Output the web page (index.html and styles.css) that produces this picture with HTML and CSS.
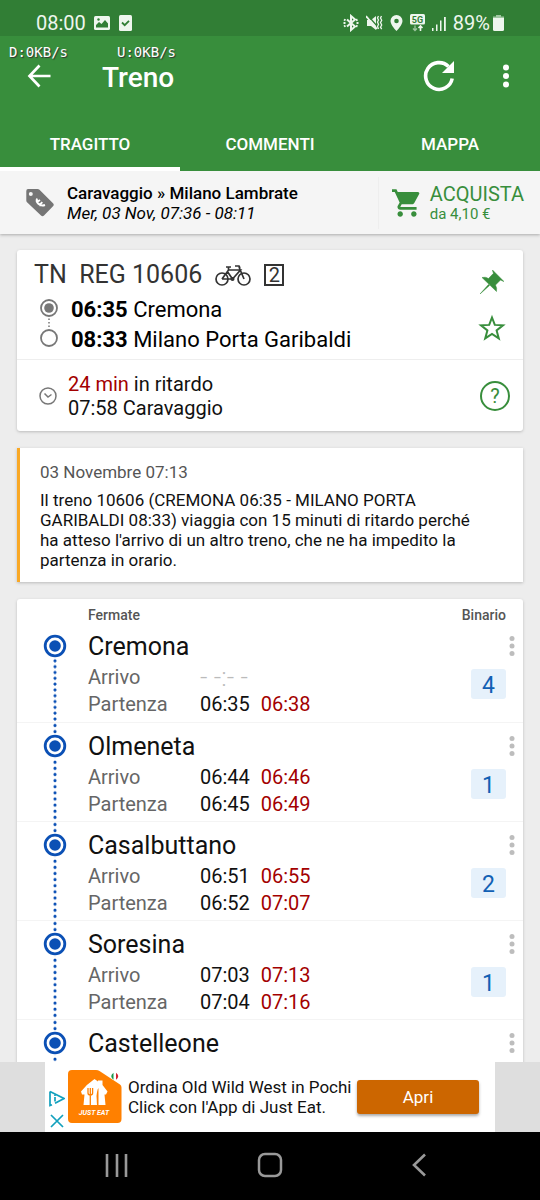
FILE: index.html
```html
<!DOCTYPE html>
<html lang="it">
<head>
<meta charset="utf-8">
<meta name="viewport" content="width=device-width, initial-scale=1">
<title>Treno</title>
<link rel="stylesheet" href="styles.css">
</head>
<body>
<svg class="defs" aria-hidden="true">
  <symbol id="stop" viewBox="0 0 24 24"><circle cx="12" cy="12" r="12" fill="#fff"/><circle cx="12" cy="12" r="9.8" fill="#fff" stroke="#0b50b5" stroke-width="2.8"/><circle cx="12" cy="12" r="5.8" fill="#0b50b5"/></symbol>
  <symbol id="dots" viewBox="0 0 6 22"><circle cx="3" cy="3.5" r="2.5"/><circle cx="3" cy="11" r="2.5"/><circle cx="3" cy="18.5" r="2.5"/></symbol>
</svg>
<div class="status">
  <span>08:00</span>
  <svg width="16" height="16" viewBox="0 0 16 16"><rect y="1" width="16" height="14" rx="1.5" fill="#eef6ee"/><path d="M2 12.5V10l3-3 2.500 2 3.500-4 3 3.500v4z" fill="#317e35"/><circle cx="4.500" cy="4.500" r="1.200" fill="#317e35"/></svg>
  <svg class="doc" width="13" height="16" viewBox="0 0 13 16"><rect width="13" height="16" rx="1.500" fill="#eef6ee"/><path d="M3 7.500l2.700 2.700L10 5.800" fill="none" stroke="#317e35" stroke-width="1.800"/></svg>
  <div class="status-right">
    <svg width="16" height="18" viewBox="0 0 16 18" fill="none" stroke="#eef6ee" stroke-width="2"><path d="M4 5.500l8 7-4 3.500V2l4 3.500-8 7"/><path d="M.5 9h2M13.500 9h2M13 6.300l1.500-.8M13 11.700l1.500.8M1 5.500l1.500.9M1 12.500l1.500-.9"/></svg>
    <svg width="17" height="18" viewBox="0 0 17 18" fill="#eef6ee"><path d="M1 6h4l5-4v14l-5-4H1z"/><path d="M1.500 1L11 12" stroke="#317e35" stroke-width="1.200"/><path d="M0 2l11 13" stroke="#eef6ee" stroke-width="1.800"/><path d="M12.500 2l-1 2 1 2-1 2 1 2.500-1 2 1 2.500M15.500 2l-1 2 1.200 2.300-1.200 2.300 1.200 2.400-1.200 2.200 1.200 2" fill="none" stroke="#eef6ee" stroke-width="1.300"/></svg>
    <svg width="13" height="18" viewBox="0 0 13 18"><path fill-rule="evenodd" fill="#eef6ee" d="M6.500 1A6 6 0 0 0 .5 7c0 4 6 10 6 10s6-6 6-10a6 6 0 0 0-6-6zm0 3.700a2.300 2.300 0 1 1 0 4.600 2.300 2.300 0 0 1 0-4.600z"/></svg>
    <svg width="15" height="18" viewBox="0 0 15 18"><rect width="15" height="10.500" rx="1.500" fill="#eef6ee"/><text x="7.500" y="8.500" text-anchor="middle" class="net">5G</text><path d="M5 11.500v5M3 14.500l2 2 2-2" fill="none" stroke="#9fc7a1" stroke-width="1.300"/><path d="M10.500 17v-5M8.500 14l2-2 2 2" fill="none" stroke="#eef6ee" stroke-width="1.600"/></svg>
    <svg width="14" height="18" viewBox="0 0 14 18" fill="#eef6ee"><path d="M0 14h1.500v3H0zM4 10.500h1.500V17H4zM8 6.500h1.500V17H8zM12 3h1.800v14H12z"/></svg>
    <span>89%</span>
    <svg class="battery" width="11" height="18" viewBox="0 0 11 18"><path d="M3 1h5v1.500h3V5H0V2.500h3z" fill="#9fc7a1"/><path d="M0 4h11v11.500q0 1.500-1.500 1.500h-8Q0 17 0 15.500z" fill="#eef6ee"/></svg>
  </div>
</div>
<header class="header">
  <div class="speed"><span>D:0KB/s</span><span>U:0KB/s</span></div>
  <div class="appbar">
    <button class="icon-btn" aria-label="Indietro"><svg width="24" height="24" viewBox="0 0 24 24" fill="none" stroke="#fff" stroke-width="2.700"><path d="M12.500 1.500L2.500 12l10 10.500M2.500 12H23.500"/></svg></button>
    <h1>Treno</h1>
    <button class="icon-btn" aria-label="Aggiorna"><svg width="32" height="32" viewBox="-16 -16 32 32"><path d="M13.200 2.500A13.400 13.400 0 1 1 9.500-9.500" fill="none" stroke="#fff" stroke-width="3.600"/><path d="M15-15v12H3z" fill="#fff"/></svg></button>
    <button class="icon-btn menu" aria-label="Menu"><svg width="6" height="24" viewBox="0 0 6 24" fill="#fff"><circle cx="3" cy="3.500" r="3"/><circle cx="3" cy="12" r="3"/><circle cx="3" cy="20.500" r="3"/></svg></button>
  </div>
  <nav class="tabs"><button class="tab active">TRAGITTO</button><button class="tab">COMMENTI</button><button class="tab">MAPPA</button></nav>
</header>
<section class="offer">
  <svg class="tag" width="28" height="28" viewBox="0 0 28 28"><path fill="#757575" fill-rule="evenodd" d="M2 0h9.500q1.200 0 2 .8L27 14.300q1.500 1.500 0 3L18 26.500q-1.500 1.300-3 0L1 13.200Q.300 12.500.300 11.500V2Q.300 0 2 0zm2.800 3a2 2 0 1 0 0 4 2 2 0 0 0 0-4z"/><path d="M11 9.500c-1.500 3.500 2.500 8.500 8 6.500M10.200 13.500l3.800-2.500M13 16.500l3.300-3.300" fill="none" stroke="#fff" stroke-width="1.900"/></svg>
  <div class="trip"><strong>Caravaggio » Milano Lambrate</strong><em>Mer, 03 Nov, 07:36 - 08:11</em></div>
  <button class="buy">
    <svg width="28" height="28" viewBox="1 2 20.500 20" fill="#388e3c"><path d="M7 18c-1.100 0-1.990.9-1.990 2S5.900 22 7 22s2-.9 2-2-.9-2-2-2zM1 2v2h2l3.600 7.590-1.350 2.450c-.16.280-.25.610-.25.960 0 1.100.9 2 2 2h12v-2H7.420c-.140 0-.250-.110-.250-.250l.030-.120.900-1.630h7.450c.750 0 1.410-.410 1.750-1.030l3.580-6.490A1.003 1.003 0 0 0 20 4H5.210l-.940-2H1zm16 16c-1.100 0-1.990.9-1.990 2s.890 2 1.990 2 2-.9 2-2-.9-2-2-2z"/></svg>
    <span><b>ACQUISTA</b><small>da 4,10 €</small></span>
  </button>
</section>
<main class="content">
  <section class="card train">
    <div class="summary">
      <div class="summary-text">
        <h2>TN&nbsp; REG 10606
          <svg width="36" height="21" viewBox="0 0 36 21" fill="none" stroke="#333" stroke-width="1.700"><circle cx="7" cy="14" r="6"/><circle cx="29" cy="14" r="6"/><path d="M7 14l6.500-9h12l-8 9H7M12 6l5.500 8M24 2l5 12M20 1h4l1 2M11 2h5M13.500 2v3"/><circle cx="17.500" cy="14" r="1.200"/></svg>
          <span class="class2">2</span></h2>
        <div class="route">
          <svg class="route-line" width="18" height="48" viewBox="0 0 18 48" fill="none" stroke="#777"><circle cx="9" cy="9" r="8" stroke-width="1.800"/><circle cx="9" cy="9" r="4.800" fill="#777" stroke="none"/><path d="M9 19.500V29" stroke-width="1.500" stroke-dasharray="1.500 2"/><circle cx="9" cy="39" r="8" stroke-width="1.800"/></svg>
          <div><p><b>06:35</b> Cremona</p><p><b>08:33</b> Milano Porta Garibaldi</p></div>
        </div>
      </div>
      <div class="actions">
        <button class="icon-btn" aria-label="Fissa"><svg width="24" height="24" viewBox="0 0 24 24" fill="#388e3c"><path d="M12.500 0q.200 1.800 1 3.300L8.500 8.500Q5.300 6.500 2 7.500l14.500 14q.8-3.300-1-6.500l5-5q1.500.9 3.500 1.600zM8.500 14.500L0 24l9.500-8.500z" stroke="#388e3c" stroke-width=".5"/></svg></button>
        <button class="icon-btn" aria-label="Preferito"><svg width="28" height="28" viewBox="0 0 28 28" fill="none" stroke="#388e3c" stroke-width="2"><path d="M14 3.500l2.800 7.400 8.200.4-6.400 5.100 2.200 8L14 20l-6.800 4.400 2.200-8L3 11.300l8.200-.4z"/></svg></button>
      </div>
    </div>
    <div class="delay">
      <svg width="18" height="18" viewBox="0 0 18 18" fill="none" stroke="#777" stroke-width="1.500"><circle cx="9" cy="9" r="8"/><path d="M5.500 6.500L9 10l3.500-2.500"/></svg>
      <p><span class="late">24 min</span> in ritardo<br>07:58 Caravaggio</p>
      <button class="help" aria-label="Aiuto">?</button>
    </div>
  </section>
  <article class="card notice"><time>03 Novembre 07:13</time><p>Il treno 10606 (CREMONA 06:35 - MILANO PORTA GARIBALDI 08:33) viaggia con 15 minuti di ritardo perché ha atteso l'arrivo di un altro treno, che ne ha impedito la partenza in orario.</p></article>
  <table class="card stops">
    <thead><tr><td></td><th class="name">Fermate</th><th class="platform-head">Binario</th></tr></thead>
    <tbody>
      <tr><td class="track first"><svg><use href="#stop"/></svg></td><td class="info"><h3>Cremona</h3><dl><dt>Arrivo</dt><dd class="none">- -:- -</dd><dt>Partenza</dt><dd>06:35 <span class="late">06:38</span></dd></dl></td><td class="platform"><button class="more" aria-label="Altro"><svg><use href="#dots"/></svg></button><span>4</span></td></tr>
      <tr><td class="track"><svg><use href="#stop"/></svg></td><td class="info"><h3>Olmeneta</h3><dl><dt>Arrivo</dt><dd>06:44 <span class="late">06:46</span></dd><dt>Partenza</dt><dd>06:45 <span class="late">06:49</span></dd></dl></td><td class="platform"><button class="more" aria-label="Altro"><svg><use href="#dots"/></svg></button><span>1</span></td></tr>
      <tr><td class="track"><svg><use href="#stop"/></svg></td><td class="info"><h3>Casalbuttano</h3><dl><dt>Arrivo</dt><dd>06:51 <span class="late">06:55</span></dd><dt>Partenza</dt><dd>06:52 <span class="late">07:07</span></dd></dl></td><td class="platform"><button class="more" aria-label="Altro"><svg><use href="#dots"/></svg></button><span>2</span></td></tr>
      <tr><td class="track"><svg><use href="#stop"/></svg></td><td class="info"><h3>Soresina</h3><dl><dt>Arrivo</dt><dd>07:03 <span class="late">07:13</span></dd><dt>Partenza</dt><dd>07:04 <span class="late">07:16</span></dd></dl></td><td class="platform"><button class="more" aria-label="Altro"><svg><use href="#dots"/></svg></button><span>1</span></td></tr>
      <tr><td class="track"><svg><use href="#stop"/></svg></td><td class="info"><h3>Castelleone</h3></td><td class="platform"><button class="more" aria-label="Altro"><svg><use href="#dots"/></svg></button></td></tr>
    </tbody>
  </table>
</main>
<aside class="ad-bar">
  <div class="ad">
    <div class="ad-marks">
      <svg width="16" height="17" viewBox="0 0 16 17" fill="none" stroke="#12a0bd" stroke-width="1.700"><path d="M1 1.500v14l2-.8M1 1.500L15 8.500 6 13.200"/><path d="M6 7v4.500M6 4.500V6"/></svg>
      <svg width="14" height="14" viewBox="0 0 14 14" stroke="#12a0bd" stroke-width="1.700"><path d="M1 1l12 12M13 1L1 13"/></svg>
    </div>
    <svg class="logo" width="54" height="54" viewBox="0 0 54 54"><path d="M4 0h24q2 0 3.500 1l20.500 13.500q1.500 1.200 1.500 3V49q0 4-4 4H4q-4 0-4-4V4q0-4 4-4z" fill="#ff8000"/><path d="M26.500 9l3.500 2.500V10.500h4.500V15l5 6.500-1.500 3h-1.500l1 10.500h-22l1-10.500H14l-1-3q6-7.500 13.500-12.500z" fill="#fff"/><path d="M20 18v5q0 2 2.300 2t2.300-2v-5M22.300 18v17" fill="none" stroke="#ff8000" stroke-width="1.300"/><path d="M29 35l-.5-9q.5-6 2-8v17z" fill="#ff8000"/><text x="26" y="45" text-anchor="middle" class="logo-text">JUST EAT</text><path d="M45.500 2.800q-4.500 3.500 0 7z" fill="#16964a"/><path d="M48 2.800q4.500 3.500 0 7z" fill="#d3222f"/></svg>
    <p>Ordina Old Wild West in Pochi Click con l'App di Just Eat.</p>
    <button class="open">Apri</button>
  </div>
</aside>
<nav class="system">
  <button class="icon-btn" aria-label="Recenti"><svg width="24" height="24" viewBox="0 0 24 24" stroke="#999" stroke-width="2.600"><path d="M2 1v23M12 1v23M21 1v23"/></svg></button>
  <button class="icon-btn" aria-label="Home"><svg width="26" height="26" viewBox="0 0 26 26"><rect x="2" y="2" width="22" height="22" rx="6" fill="none" stroke="#999" stroke-width="2.500"/></svg></button>
  <button class="icon-btn" aria-label="Indietro"><svg width="16" height="24" viewBox="0 0 16 24" fill="none" stroke="#999" stroke-width="2.600"><path d="M14 1.500L3 12l11 10.500"/></svg></button>
</nav>
</body>
</html>
```
FILE: styles.css
```css
* { box-sizing: border-box; }
body { margin: 0; height: 100vh; display: flex; flex-direction: column; font-family: Roboto, "Liberation Sans", sans-serif; background: #ededed; color: #111; }
h1, h2, h3, p, dl, dd { margin: 0; font-weight: 400; }
button { margin: 0; padding: 0; border: 0; background: none; font: inherit; color: inherit; cursor: pointer; }
svg { display: block; flex: none; }
.defs { position: absolute; width: 0; height: 0; }
.icon-btn { display: grid; place-items: center; flex: none; }
.late { color: #a30000; }

.status { flex: none; height: 36px; padding: 9px 36px 0; display: flex; align-items: center; gap: 8px; background: #317e35; color: #eef6ee; font-size: 20px; line-height: 24px; }
.status .doc { margin-left: 1px; }
.status-right { margin-left: auto; display: flex; align-items: center; gap: 7px; }
.battery { margin-left: -4px; }
.net { font: bold 9px Roboto, sans-serif; fill: #317e35; }

.header { flex: none; position: relative; background: #388e3c; color: #fff; }
.speed { position: absolute; top: 9px; left: 9px; display: flex; gap: 49px; font: 14px/14px "DejaVu Sans Mono", monospace; text-shadow: 1px 1px 1px #333; }
.appbar { height: 80px; display: flex; align-items: center; padding: 0 31px 0 27px; }
.appbar h1 { flex: 1; margin-left: 51px; font-size: 28px; font-weight: 500; line-height: 32px; padding-top: 3px; }
.menu { margin-left: 48px; }
.tabs { display: grid; grid-template-columns: 1fr 1fr 1fr; height: 55px; }
.tab { font-size: 17px; font-weight: 500; border-bottom: 4px solid transparent; padding-top: 4px; }
.tab.active { border-color: #fff; }

.offer { flex: none; height: 63px; display: flex; align-items: center; padding-left: 26px; background: #f5f5f5; box-shadow: 0 1px 3px #aaa; }
.trip { flex: 1; margin-left: 13px; font-size: 17px; line-height: 20px; white-space: nowrap; color: #000; }
.trip strong, .trip em { display: block; }
.trip strong { font-weight: 500; }
.buy { display: flex; align-items: center; gap: 10px; height: 52px; padding: 0 16px 0 13px; border-left: 1px solid #eee; color: #388e3c; text-align: left; }
.buy b, .buy small { display: block; font-weight: 400; }
.buy b { font-size: 20px; line-height: 22px; }
.buy small { font-size: 15px; line-height: 18px; }

.content { flex: 1; min-height: 0; overflow: hidden auto; scrollbar-width: none; padding: 16px 17px; }
.card { background: #fff; border-radius: 3px; box-shadow: 0 1px 3px #bbb; }
.summary { display: flex; justify-content: space-between; height: 110px; padding: 9px 17px 0; border-bottom: 1px solid #eee; }
.summary h2 { display: flex; align-items: center; gap: 13px; font-size: 25px; line-height: 32px; color: #333; }
.class2 { border: 2px solid #333; width: 20px; height: 22px; font-size: 20px; line-height: 19px; text-align: center; }
.route { display: flex; gap: 13px; padding-left: 6px; font-size: 22px; color: #000; }
.route-line { margin-top: 8px; }
.route p { padding-top: 4px; line-height: 26px; }
.route div { padding-top: 2px; }
.actions { display: flex; flex-direction: column; align-items: center; gap: 20px; padding: 11px 0 0; }
.delay { display: flex; align-items: center; gap: 11px; height: 71px; padding: 0 13px 0 22px; font-size: 20px; line-height: 24px; }
.delay p { flex: 1; }
.help { width: 30px; height: 30px; border: 2px solid #388e3c; border-radius: 50%; color: #388e3c; font-size: 20px; line-height: 26px; }

.notice { margin-top: 17px; padding: 13px 40px 12px 20px; border-left: 3px solid #f9a825; border-radius: 0; font-size: 17px; line-height: 20px; }
.notice time { display: block; line-height: 22px; margin-bottom: 7px; color: #555; }

.stops { width: 100%; margin-top: 17px; border-collapse: collapse; }
.stops td, .stops th { padding: 0; vertical-align: top; }
.stops th { font-size: 14px; font-weight: 500; line-height: 16px; padding: 8px 17px 0 0; height: 24px; color: #555; }
.name { text-align: left; }
.platform-head { text-align: right; }
.stops tbody tr { height: 99px; border-bottom: 1px solid #f4f4f4; }
.track { width: 71px; background: radial-gradient(circle at 38px 3px, #0b50b5 1px, transparent 2px) 0 0 / 71px 6px round; }
.track.first { background: linear-gradient(#fff, #fff) 0 0 / 100% 20px no-repeat, radial-gradient(circle at 38px 3px, #0b50b5 1px, transparent 2px) 0 0 / 71px 6px round; }
.track svg { width: 24px; height: 24px; margin: 11px 0 0 26px; }
.info h3 { font-size: 25px; line-height: 30px; padding-top: 9px; color: #111; }
.info dl { display: grid; grid-template-columns: 112px 1fr; padding-top: 2px; font-size: 20px; line-height: 27px; white-space: nowrap; }
.info dt { color: #666; }
.info .late { margin-left: 6px; }
.info .none { color: #bbb; font-size: 26px; font-weight: 300; }
.platform { width: 90px; }
.more { display: block; margin: 12px 8px 0 auto; }
.more svg { width: 6px; height: 22px; fill: #bdbdbd; }
.platform span { display: block; width: 35px; height: 30px; margin: 12px 17px 0 auto; border-radius: 3px; background: #e6f1fb; color: #1260b4; font-size: 23px; line-height: 33px; text-align: center; }

.ad-bar { flex: none; background: #dedede; display: flex; justify-content: center; padding: 0 45px; }
.ad { flex: 1; display: flex; align-items: center; height: 70px; padding: 0 16px 0 4px; background: #fff; }
.ad-marks { align-self: flex-end; display: grid; justify-items: center; gap: 7px; padding-bottom: 4px; }
.logo { margin-left: 3px; }
.logo-text { font: italic bold 7px Roboto, sans-serif; fill: #fff; }
.ad p { flex: 1; margin-left: 6px; font-size: 17px; line-height: 20px; }
.open { width: 122px; height: 34px; border-radius: 3px; background: #cc6600; color: #fff; font-size: 17px; box-shadow: 0 2px 3px #aaa; }
.system { flex: none; height: 68px; display: flex; align-items: center; justify-content: space-between; padding: 0 113px 2px 105px; background: #000; }
```
